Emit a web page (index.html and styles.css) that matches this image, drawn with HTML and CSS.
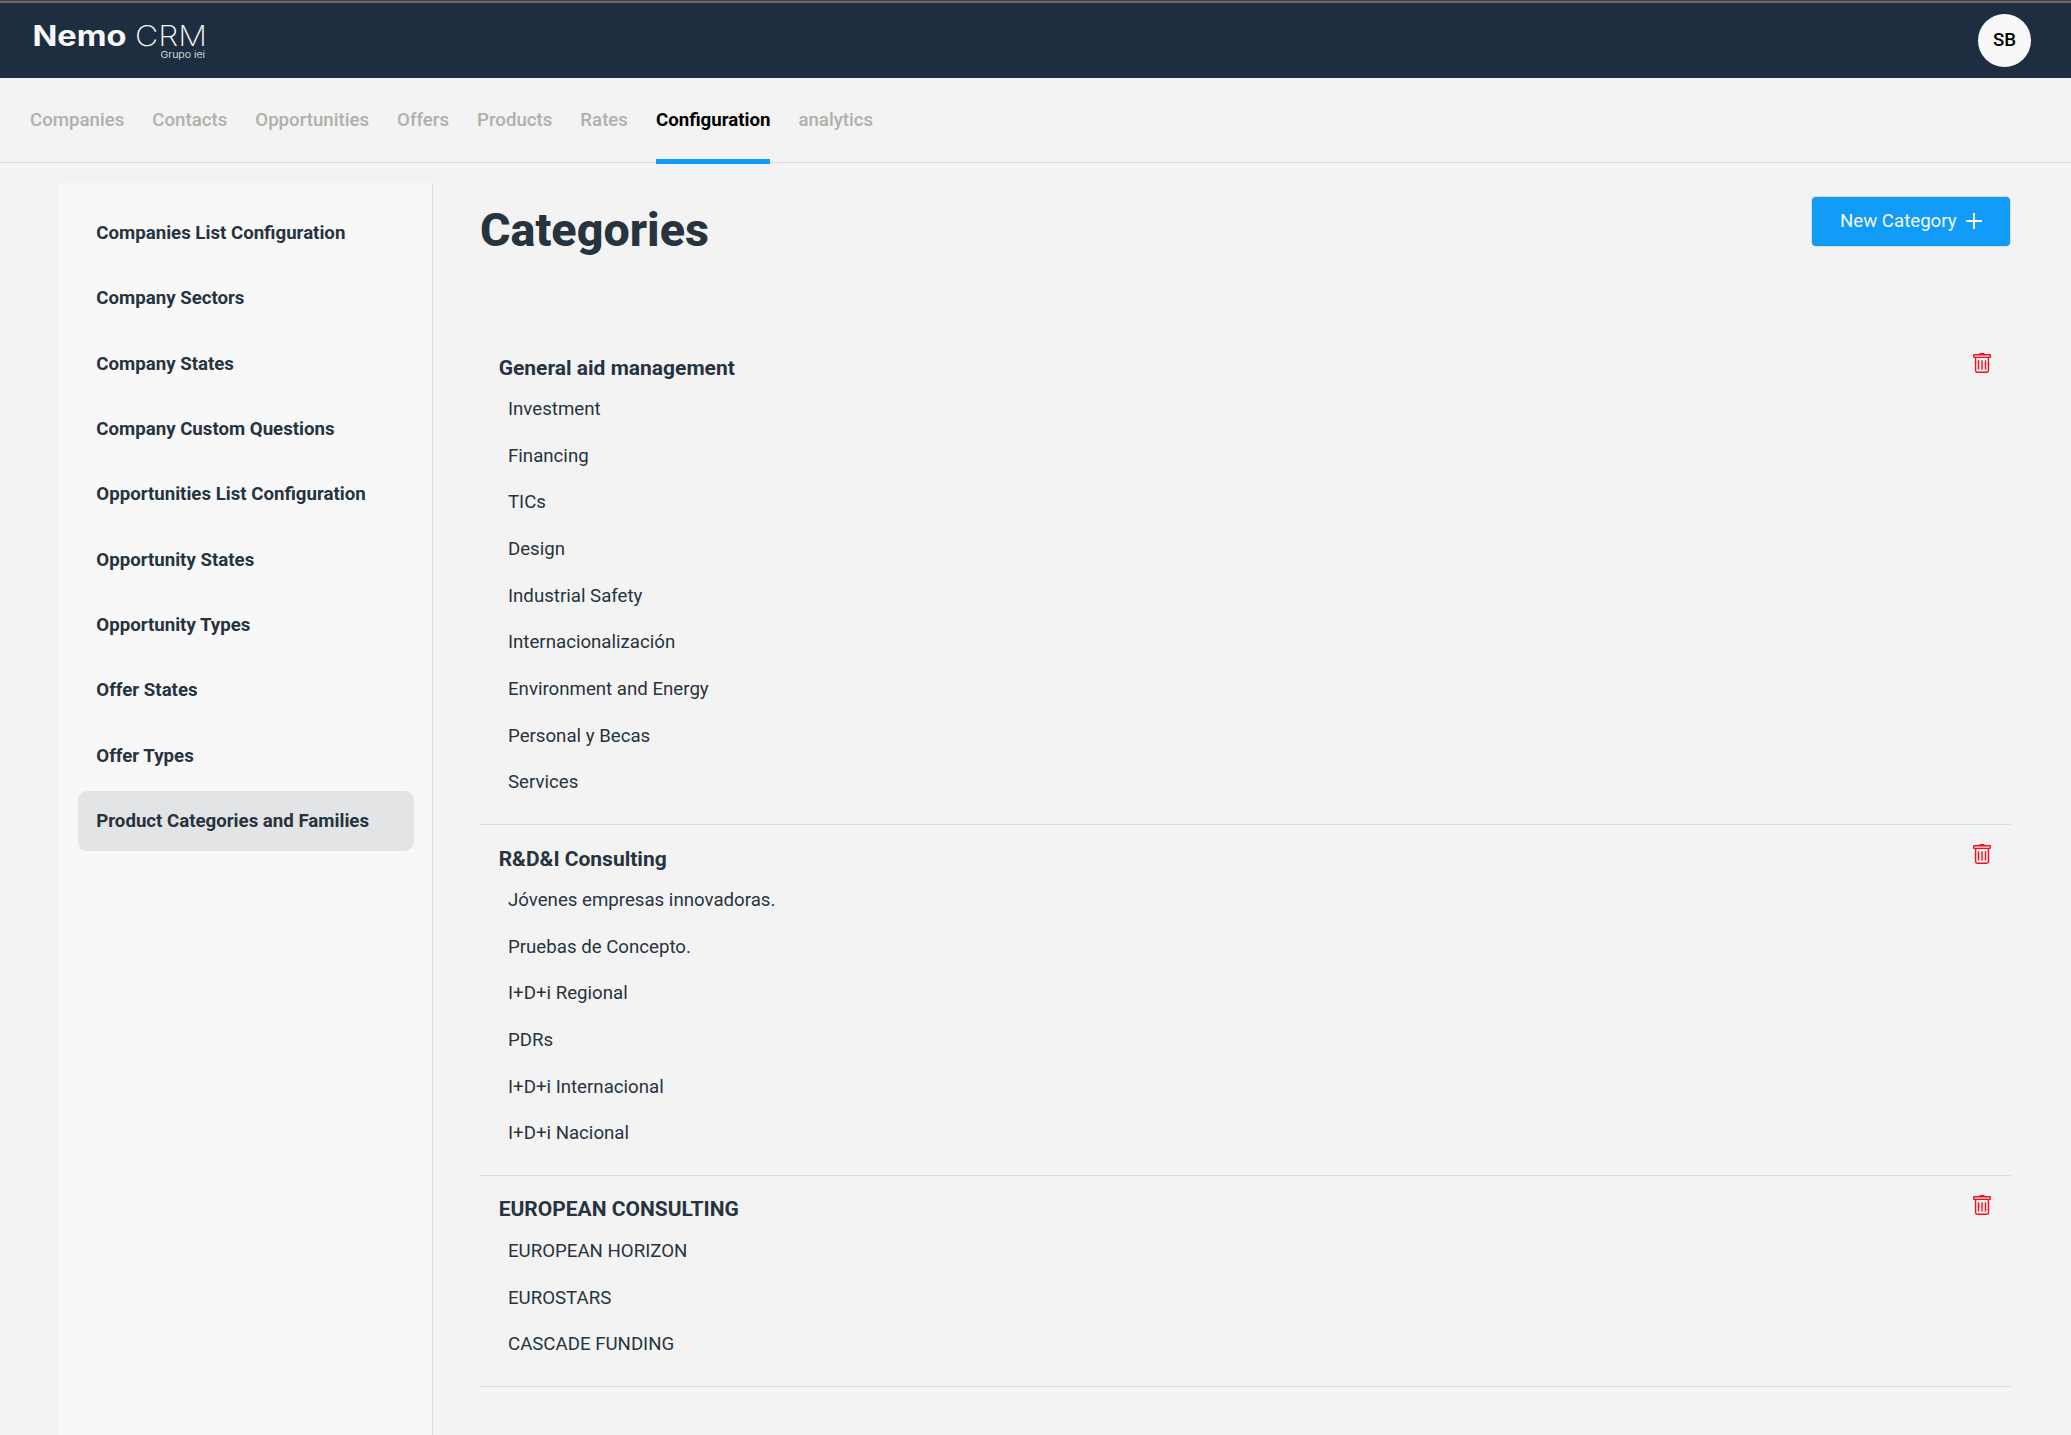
FILE: index.html
```html
<!DOCTYPE html>
<html lang="en">
<head>
<meta charset="utf-8">
<title>Nemo CRM</title>
<link rel="stylesheet" href="styles.css">
</head>
<body>
<svg width="0" height="0" class="sprite" aria-hidden="true">
  <symbol id="trash" viewBox="0 0 18 20">
    <path d="M6.5 .9h5" stroke-width="1.8"/>
    <rect x=".7" y="1.7" width="16.6" height="2.7" rx=".6"/>
    <path d="M2.6 4.7V17.6q0 1.7 1.7 1.7h9.4q1.7 0 1.7-1.7V4.7M5.5 7.2v9.4M9 7.2v9.4M12.5 7.2v9.4"/>
  </symbol>
</svg>
<header class="topbar">
  <svg class="logo" width="172" height="38" viewBox="0 0 172 38" role="img" aria-label="Nemo CRM Grupo iei">
    <text class="logo-bold" x="-1.5" y="22.5" textLength="94" lengthAdjust="spacingAndGlyphs">Nemo</text>
    <text class="logo-light" x="101" y="22.5" textLength="72" lengthAdjust="spacingAndGlyphs">CRM</text>
    <text class="logo-small" x="126.5" y="34.5" textLength="44.5" lengthAdjust="spacingAndGlyphs">Grupo iei</text>
  </svg>
  <div class="avatar">SB</div>
</header>
<nav class="tabs">
  <a class="tab">Companies</a>
  <a class="tab">Contacts</a>
  <a class="tab">Opportunities</a>
  <a class="tab">Offers</a>
  <a class="tab">Products</a>
  <a class="tab">Rates</a>
  <a class="tab active">Configuration</a>
  <a class="tab">analytics</a>
</nav>
<div class="layout">
  <aside class="sidebar">
    <a class="side-item">Companies List Configuration</a>
    <a class="side-item">Company Sectors</a>
    <a class="side-item">Company States</a>
    <a class="side-item">Company Custom Questions</a>
    <a class="side-item">Opportunities List Configuration</a>
    <a class="side-item">Opportunity States</a>
    <a class="side-item">Opportunity Types</a>
    <a class="side-item">Offer States</a>
    <a class="side-item">Offer Types</a>
    <a class="side-item selected">Product Categories and Families</a>
  </aside>
  <main class="content">
    <div class="page-head">
      <h1>Categories</h1>
      <button class="new-button">New Category
        <svg width="16" height="16" viewBox="0 0 16 16"><path d="M8 .5v15M.5 8h15"/></svg>
      </button>
    </div>
    <section class="category">
      <div class="category-body">
        <h2>General aid management</h2>
        <ul>
          <li>Investment</li>
          <li>Financing</li>
          <li>TICs</li>
          <li>Design</li>
          <li>Industrial Safety</li>
          <li>Internacionalización</li>
          <li>Environment and Energy</li>
          <li>Personal y Becas</li>
          <li>Services</li>
        </ul>
      </div>
      <svg class="trash"><use href="#trash"/></svg>
    </section>
    <section class="category">
      <div class="category-body">
        <h2>R&amp;D&amp;I Consulting</h2>
        <ul>
          <li>Jóvenes empresas innovadoras.</li>
          <li>Pruebas de Concepto.</li>
          <li>I+D+i Regional</li>
          <li>PDRs</li>
          <li>I+D+i Internacional</li>
          <li>I+D+i Nacional</li>
        </ul>
      </div>
      <svg class="trash"><use href="#trash"/></svg>
    </section>
    <section class="category">
      <div class="category-body">
        <h2>EUROPEAN CONSULTING</h2>
        <ul>
          <li>EUROPEAN HORIZON</li>
          <li>EUROSTARS</li>
          <li>CASCADE FUNDING</li>
        </ul>
      </div>
      <svg class="trash"><use href="#trash"/></svg>
    </section>
  </main>
</div>
</body>
</html>
```

FILE: styles.css
```css
* { box-sizing: border-box; }

body {
  margin: 0;
  height: 1435px;
  display: flex;
  flex-direction: column;
  overflow: hidden;
  background: #f3f3f3;
  color: #27333f;
  font: 18.667px/1.5 Roboto, sans-serif;
}

.sprite { position: absolute; }

.topbar {
  flex: none;
  height: 78px;
  padding: 3px 40px 0 34px;
  background: linear-gradient(#444245 1px, #6b676a 1px, #6b676a 3px, #1e2e40 3px);
  display: flex;
  align-items: flex-start;
  justify-content: space-between;
}

.logo { margin-top: 20px; fill: #f8f8f8; font-family: Inter, sans-serif; overflow: visible; }
.logo-bold { font-size: 28px; font-weight: 700; }
.logo-light { font-size: 28px; font-weight: 200; }
.logo-small { font-size: 9.5px; font-weight: 300; }

.avatar {
  width: 53px;
  height: 53px;
  margin-top: 11px;
  border-radius: 50%;
  background: #f8f8f8;
  color: #000;
  font-weight: 500;
  line-height: 53px;
  text-align: center;
}

.tabs {
  flex: none;
  height: 85px;
  padding-left: 30px;
  border-bottom: 1px solid #d9dadb;
  display: flex;
  gap: 28px;
}

.tab {
  height: 86px;
  line-height: 85px;
  font-weight: 500;
  color: #b0b0ab;
}

.tab.active { color: #000; font-weight: 700; border-bottom: 5px solid #109cf8; }

.layout { flex: 1; display: flex; padding: 20px 60px 0 59px; }

.sidebar {
  flex: none;
  width: 374px;
  padding: 20px 18px 0 19px;
  border-right: 1px solid #d9dadb;
  background: #f8f8f8;
  display: flex;
  flex-direction: column;
  gap: 4.667px;
}

.side-item {
  flex: none;
  height: 60.667px;
  padding-left: 18.3px;
  border-radius: 9px;
  line-height: 60.667px;
  font-weight: 700;
}

.selected { background: #e3e4e5; }

.content { flex: 1; padding: 14px 0 0 47px; }

.page-head {
  height: 137px;
  display: flex;
  justify-content: space-between;
  align-items: flex-start;
}

h1 { margin: 0; font-size: 46.667px; line-height: 66px; font-weight: 800; }

.new-button {
  width: 198px;
  height: 49px;
  margin-right: 1px;
  padding: 0 28px 2px;
  border: 0;
  border-radius: 4px;
  background: #109cf8;
  box-shadow: 0 0 0 1px #dcdcdc;
  color: #f8f8f8;
  font: 18.667px Roboto, sans-serif;
  display: flex;
  align-items: center;
  justify-content: space-between;
}

.new-button path { stroke: #f8f8f8; stroke-width: 2; stroke-linecap: round; }

.category {
  display: flex;
  justify-content: space-between;
  align-items: flex-start;
  padding: 18.667px 20px 17.867px 18.667px;
  border-bottom: 1px solid #d9dadb;
}

h2 { margin: 0 0 1.8px; font-size: 21px; line-height: 31.667px; font-weight: 700; }

ul { margin: 0; padding: 0 0 0 9.333px; list-style: none; }

li { height: 46.667px; line-height: 46.667px; }

.trash { width: 18px; height: 20px; margin-top: .6px; fill: none; stroke: #fa0a1c; stroke-width: 1.4; }
```
